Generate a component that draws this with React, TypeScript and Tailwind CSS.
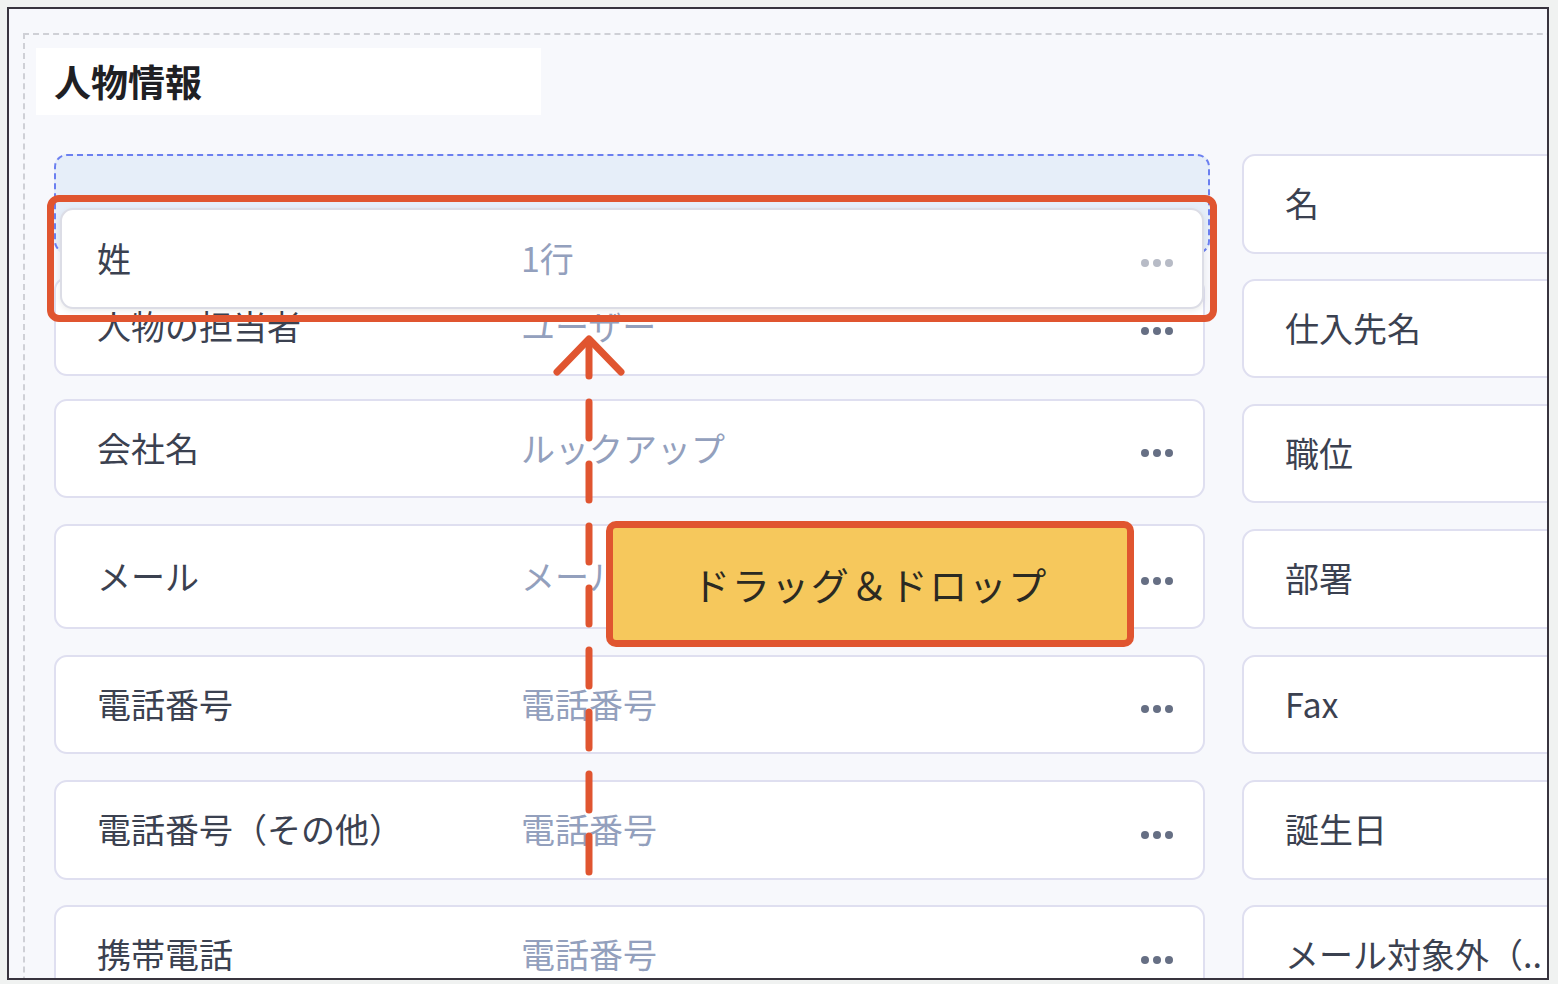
import React from 'react';

const FONT = '"Noto Sans CJK JP", "Noto Sans", sans-serif';

type Row = { label: string; type: string; box: string };

const LEFT: Row[] = [
  { label: '人物の担当者', type: 'ユーザー', box: 'mt-[23px] h-[99px]' },
  { label: '会社名', type: 'ルックアップ', box: 'mt-[23px] h-[99px]' },
  { label: 'メール', type: 'メール', box: 'mt-[26px] h-[105px]' },
  { label: '電話番号', type: '電話番号', box: 'mt-[26px] h-[99px]' },
  { label: '電話番号（その他）', type: '電話番号', box: 'mt-[26px] h-[100px]' },
  { label: '携帯電話', type: '電話番号', box: 'mt-[25px] h-[100px]' },
];

const RIGHT: Row[] = [
  { label: '名', type: '', box: 'h-[100px]' },
  { label: '仕入先名', type: '', box: 'mt-[25px] h-[99px]' },
  { label: '職位', type: '', box: 'mt-[26px] h-[99px]' },
  { label: '部署', type: '', box: 'mt-[26px] h-[100px]' },
  { label: 'Fax', type: '', box: 'mt-[26px] h-[99px]' },
  { label: '誕生日', type: '', box: 'mt-[26px] h-[100px]' },
  { label: 'メール対象外（..', type: '', box: 'mt-[25px] h-[100px]' },
];

function Dots({ light }: { light?: boolean }) {
  return (
    <svg width="34" height="10" viewBox="0 0 34 10" className="mt-[12px]">
      {[5, 17, 29].map((cx) => (
        <circle key={cx} cx={cx} cy="5" r="4" fill={light ? '#b7bbc6' : '#666f84'} />
      ))}
    </svg>
  );
}

function FieldCard({ row }: { row: Row }) {
  return (
    <div
      className={`flex shrink-0 items-center rounded-[13px] border-2 border-[#dfdff0] bg-white pb-[3px] pl-[41px] pr-[29px] ${row.box}`}
    >
      <span className="w-[424px] shrink-0 text-[34px] text-[#3b4150]">{row.label}</span>
      <span className="flex-1 text-[34px] text-[#93a0bd]">{row.type}</span>
      <Dots />
    </div>
  );
}

function SideCard({ row }: { row: Row }) {
  return (
    <div
      className={`flex shrink-0 items-center whitespace-nowrap rounded-[13px] border-2 border-[#dfdff0] bg-white pb-[3px] pl-[41px] ${row.box}`}
    >
      <span className="text-[34px] text-[#3b4150]">{row.label}</span>
    </div>
  );
}

export default function App() {
  return (
    <div
      className="relative h-[984px] w-[1558px] overflow-hidden bg-[#f0f2f1]"
      style={{ fontFamily: FONT }}
    >
      <div className="ml-[7px] mt-[7px] h-[973px] w-[1542px] overflow-hidden border-2 border-[#38343e] bg-[#f7f8fc]">
        <div className="ml-[14px] mt-[24px] h-[1100px] w-[1600px] border-2 border-dashed border-[#cfd0d6] pl-[11px] pt-[13px]">
          <div className="flex h-[67px] w-[505px] items-center bg-white pl-[18px]">
            <h2 className="text-[37px] font-bold text-[#1f2024]">人物情報</h2>
          </div>

          <div className="ml-[18px] mt-[39px] flex gap-[32px]">
            <div className="flex w-[1156px] flex-col">
              <div className="h-[100px] w-[1156px] shrink-0 rounded-[13px] border-2 border-dashed border-[#6b7ff0] bg-[#e6eef9]" />
              {LEFT.map((row) => (
                <div key={row.label} className="w-[1151px]">
                  <FieldCard row={row} />
                </div>
              ))}
            </div>
            <div className="flex w-[420px] flex-col">
              {RIGHT.map((row) => (
                <SideCard key={row.label} row={row} />
              ))}
            </div>
          </div>
        </div>
      </div>

      {/* dragged card */}
      <div className="absolute left-[60px] top-[208px] flex h-[101px] w-[1144px] items-center rounded-[13px] border-2 border-[#dcdde6] bg-white pb-[3px] pl-[35px] pr-[28px] shadow-[0_2px_6px_rgba(0,0,0,0.08)]">
        <span className="w-[424px] shrink-0 text-[34px] text-[#3b4150]">姓</span>
        <span className="flex-1 text-[34px] text-[#93a0bd]">1行</span>
        <Dots light />
      </div>

      {/* highlight */}
      <div className="absolute left-[47px] top-[195px] h-[127px] w-[1170px] rounded-[12px] border-[7px] border-[#e05530]" />

      {/* arrow */}
      <svg
        className="absolute left-[550px] top-[330px]"
        width="80"
        height="565"
        viewBox="0 0 80 565"
        fill="none"
        stroke="#e05530"
        strokeWidth="7"
        strokeLinecap="round"
        strokeLinejoin="round"
      >
        <polyline points="7,42 39,9 71,42" />
        <line x1="39" y1="10" x2="39" y2="558" strokeDasharray="36 26" />
      </svg>

      {/* drag label */}
      <div className="absolute left-[606px] top-[521px] flex h-[126px] w-[528px] items-center justify-center rounded-[10px] border-[7px] border-[#e05530] bg-[#f6c85c] pb-[2px]">
        <span className="text-[38px] tracking-[1.5px] text-[#2b2a22]">ドラッグ＆ドロップ</span>
      </div>
    </div>
  );
}
